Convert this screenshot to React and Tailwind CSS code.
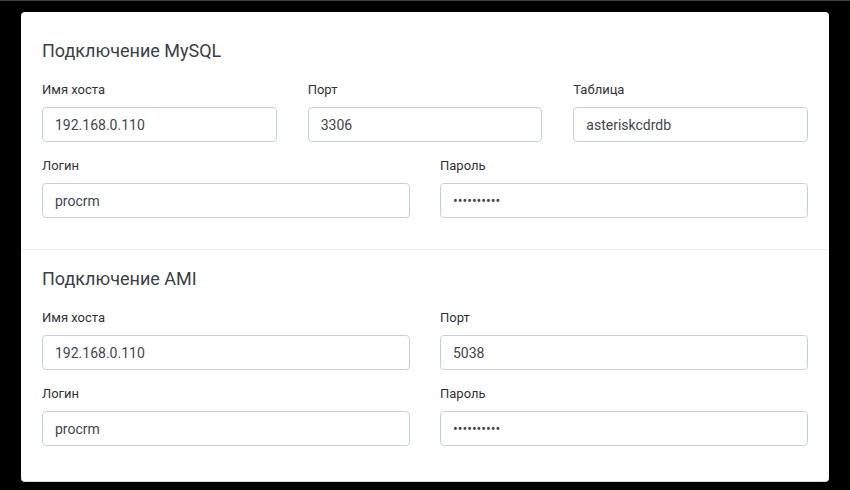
import { useState } from "react";

const fieldCls =
  "h-[35px] w-full rounded-[4px] border border-[#c6d0db] bg-white px-[12px] text-[14px] text-[#3f464e] outline-none";

function Field({ label, value, type = "text" }) {
  const [v, setV] = useState(value);
  return (
    <div className="flex flex-col">
      <label className="mb-[9px] text-[13px] leading-[16px] text-[#2f3338]">{label}</label>
      <input type={type} value={v} onChange={(e) => setV(e.target.value)} className={fieldCls} />
    </div>
  );
}

export default function App() {
  return (
    <div
      className="min-h-[490px] bg-black"
      style={{ fontFamily: "Roboto, 'Noto Sans', sans-serif" }}
    >
      <div className="h-px bg-[#3a4048]" />
      <div className="px-[21px] pt-[11px] pb-[7px]">
        <div className="rounded-[4px] border-b border-[#cdd7e4] bg-white">
          <section className="px-[21px] pt-[28px] pb-[31px]">
            <h2 className="mb-[20px] text-[18px] leading-[22px] text-[#3a4047]">Подключение MySQL</h2>
            <div className="grid grid-cols-3 gap-x-[31px]">
              <Field label="Имя хоста" value="192.168.0.110" />
              <Field label="Порт" value="3306" />
              <Field label="Таблица" value="asteriskcdrdb" />
            </div>
            <div className="mt-[16px] grid grid-cols-2 gap-x-[30px]">
              <Field label="Логин" value="procrm" />
              <Field label="Пароль" value="asterisk12" type="password" />
            </div>
          </section>
          <section className="border-t border-[#eceef0] px-[21px] pt-[18px] pb-[35px]">
            <h2 className="mb-[20px] text-[18px] leading-[22px] text-[#3a4047]">Подключение AMI</h2>
            <div className="grid grid-cols-2 gap-x-[30px]">
              <Field label="Имя хоста" value="192.168.0.110" />
              <Field label="Порт" value="5038" />
            </div>
            <div className="mt-[16px] grid grid-cols-2 gap-x-[30px]">
              <Field label="Логин" value="procrm" />
              <Field label="Пароль" value="asterisk12" type="password" />
            </div>
          </section>
        </div>
      </div>
    </div>
  );
}
